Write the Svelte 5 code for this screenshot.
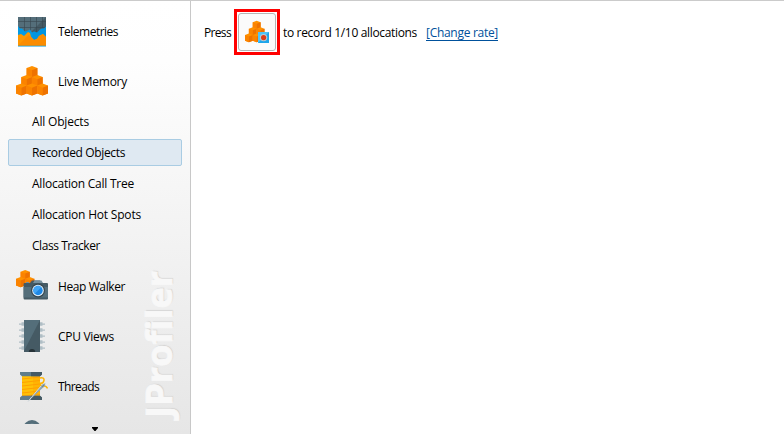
<script>
  const before = [
    { name: 'Telemetries', icon: 'telemetry', w: 59 },
    { name: 'Live Memory', icon: 'memory', w: 68 }
  ];
  const views = [
    { name: 'All Objects', w: 56 },
    { name: 'Recorded Objects', w: 92 },
    { name: 'Allocation Call Tree', w: 101 },
    { name: 'Allocation Hot Spots', w: 108 },
    { name: 'Class Tracker', w: 67 }
  ];
  const after = [
    { name: 'Heap Walker', icon: 'heap', w: 66 },
    { name: 'CPU Views', icon: 'cpu', w: 55 },
    { name: 'Threads', icon: 'thread', w: 40 }
  ];
  const selected = 'Recorded Objects';

  // Tightens or widens a label so that it takes exactly the given width.
  function fit(node, width) {
    const natural = node.getBoundingClientRect().width;
    node.style.letterSpacing = (width + 1 - natural) / node.textContent.length + 'px';
  }
</script>

{#snippet cube(x, y, s)}
  <g transform={`translate(${x} ${y}) scale(${s})`}>
    <path d="M0 2 5.4 0l5.4 2v8L5.4 12 0 10z" fill="#ff9100" />
    <path d="M0 2 5.4 4.2V12L0 10z" fill="#fb8300" />
    <path d="M10.8 2 5.4 4.2V12l5.4-2z" fill="#ee7200" />
  </g>
{/snippet}

{#snippet cubes()}
  {@render cube(10.6, 1, 1)}
  {@render cube(5.3, 10, 1)}
  {@render cube(15.9, 10, 1)}
  {@render cube(0, 18.5, 1)}
  {@render cube(10.6, 18.5, 1)}
  {@render cube(21.2, 18.5, 1)}
{/snippet}

{#snippet row(item)}
  <div class="section">
    <svg width="32" height="32" viewBox="0 0 32 32">
      {#if item.icon === 'telemetry'}
        <path d="M2 2h28v28.5H2z" fill="#455a64" />
        <path d="M2 2h28L14 18H2z" fill="#546e7a" />
        <path d="M2 6.5h28M2 12.5h28M8.5 2v16M14.5 2v16M20.5 2v16M26.5 2v16" stroke="#37474f" stroke-width=".6" />
        <path d="M2 11l2 2.5h2l3 3 3-1 2-1 2 3 2-1 3 1 3-3 2-1h2l2-2v20H2z" fill="#039be5" />
        <path d="M17 17l1-.5 3 1 3-3 2-1h2l2-2v9l-3-1-5 3-6 4z" fill="#0288d1" opacity=".3" />
        <path d="M2 20l3-1 3 2 2-2 2-2 2 1 1 4 3 3 3-1 2-3 2-1 2-1 3 3v8.5H2z" fill="#ff9800" />
        <path d="M2 30.5 12.5 20l2.5 2 3 3 3-1 2-3 4-2 3 3v8.5z" fill="#fb8c00" />
      {:else if item.icon === 'memory'}
        {@render cubes()}
      {:else if item.icon === 'heap'}
        {@render cube(4.6, 0, 0.85)}
        {@render cube(0, 7, 0.85)}
        {@render cube(9.2, 7, 0.85)}
        <path d="M14 13l2-2.5h8l2 2.5h5q1 0 1 1v14.5q0 1-1 1H8.6q-1 0-1-1V14q0-1 1-1z" fill="#455a64" />
        <path d="M17 13l1.5-2.5h7l1.5 2.5zM10 12h3v1h-3z" fill="#78909c" />
        <path d="M7.6 17H32v10.5H7.6z" fill="#546e7a" />
        <circle cx="22" cy="20.5" r="7" fill="#37474f" />
        <circle cx="22" cy="20.5" r="5.8" fill="#e3f2fd" />
        <circle cx="22" cy="20.5" r="4.7" fill="#1e88e5" />
        <path d="M18.8 23.8a4.6 4.6 0 0 1 6.4-6.6z" fill="#42a5f5" />
      {:else if item.icon === 'cpu'}
        {#each [4, 10, 16, 22, 28] as y}
          <path d={`M3 ${y - 0.5}h2.5v-1.3h3v3.6h-3V${y + 0.8}H3zM29 ${y - 0.5}h-2.5v-1.3h-3v3.6h3V${y + 0.8}H29z`} fill="#b0bec5" />
        {/each}
        <path d="M8 0h16v32H8z" fill="#455a64" />
        <path d="M8 0h16L8 31z" fill="#546e7a" />
        <path d="M12.8 32a3.2 3 0 0 1 6.4 0z" fill="#263238" />
      {:else}
        <path d="M6 6h18v20H6z" fill="#ffc107" />
        <path d="M6 9l18-2M6 12.5l18-2M6 16l18-2M6 19.5l18-2M6 23l18-2M6 26l18-1.5" stroke="#ffa000" stroke-width="1" />
        <path d="M17 6h7v20h-7z" fill="#ffa000" opacity=".4" />
        <path d="M4 2h22v2.5l-2 1.7H6L4 4.5z" fill="#607d8b" />
        <path d="M6 25.8h18l2 1.7V30H4v-2.5z" fill="#607d8b" />
        <path d="M15 2h11v2.5l-2 1.7h-9zM15 25.8h9l2 1.7V30H15z" fill="#455a64" />
        <path d="M24 8q4.5-.8 4 2.3t-3.5 3q0 4 2 3.7 3-2.5 5 1.5" fill="none" stroke="#ffb300" stroke-width="1.5" />
        <path d="M12 31.5 26.6 14.2l2.8-1L28.8 16z" fill="#90a4ae" />
        <path d="M12 31.5 25 16" stroke="#cfd8dc" stroke-width="1" />
        <path d="m26.2 17 1.8-2" stroke="#607d8b" stroke-width=".8" />
      {/if}
    </svg>
    <span use:fit={item.w}>{item.name}</span>
  </div>
{/snippet}

<div class="window">
  <aside>
    <nav>
      {#each before as item}{@render row(item)}{/each}
      {#each views as view}
        <div class="slot">
          <div class="view" class:selected={view.name === selected}>
            <span use:fit={view.w}>{view.name}</span>
          </div>
        </div>
      {/each}
      {#each after as item}{@render row(item)}{/each}
      <div class="section">
        <svg width="32" height="32" viewBox="0 0 32 32">
          <circle cx="16" cy="9" r="9" fill="#546e7a" />
          <circle cx="16" cy="10" r="6.5" fill="#78909c" />
        </svg>
      </div>
    </nav>
    <div class="more"><svg width="6" height="4" viewBox="0 0 6 4"><path d="M0 0h6v1L3.5 4h-1L0 1z" fill="#000" /></svg></div>
    <div class="brand">JProfiler</div>
  </aside>
  <main>
    <span use:fit={26}>Press</span>
    <div class="highlight">
      <button aria-label="Record allocations">
        <svg width="24" height="24" viewBox="0 0 24 24">
          <g transform="scale(.73)">{@render cubes()}</g>
          <path d="M13 12h11v11H13z" fill="#1ea5ea" />
          <path d="M13 12h11L13 23z" fill="#4fc3f7" />
          <circle cx="18.6" cy="17.6" r="3.7" fill="#b7c9d3" />
          <circle cx="18.6" cy="17.6" r="2.6" fill="#dd3b19" />
        </svg>
      </button>
    </div>
    <span use:fit={133}>to record 1/10 allocations</span>
    <a href="#rate"><span use:fit={71}>[Change rate]</span></a>
  </main>
</div>

<style>
  :global(body) { margin: 0; }
  .window {
    display: flex;
    box-sizing: border-box;
    width: 784px;
    height: 434px;
    border-top: 1px solid #cbcbcb;
    background: #fff;
    color: #000;
    font: 12px/16px "Open Sans", "Noto Sans", sans-serif;
    overflow: hidden;
    white-space: nowrap;
  }
  aside {
    position: relative;
    display: flex;
    flex-direction: column;
    box-sizing: border-box;
    width: 191px;
    border-right: 1px solid #c8c8c8;
    background: linear-gradient(#fff 0, #fefefe 60px, #e6e6e6 100%);
  }
  nav {
    position: relative;
    z-index: 1;
    height: 418px;
    padding-top: 5px;
    overflow: hidden;
  }
  .section {
    display: flex;
    align-items: center;
    gap: 10px;
    height: 50px;
    padding-left: 16px;
  }
  .section svg { flex: none; }
  .section span { padding-top: 2px; }
  .slot {
    box-sizing: border-box;
    height: 31px;
    padding: 2px 8px;
  }
  .view {
    box-sizing: border-box;
    height: 27px;
    padding: 5px 0 4px 23px;
    border: 1px solid transparent;
    border-radius: 2px;
  }
  .selected {
    border-color: #a9cce3;
    background: #dfe9f2;
  }
  .more {
    display: flex;
    justify-content: center;
    padding-top: 3px;
  }
  .brand {
    position: absolute;
    left: 139px;
    bottom: 16px;
    writing-mode: vertical-rl;
    transform: rotate(180deg);
    color: #f8f8f8;
    font: bold 36px/40px "Open Sans", "Noto Sans", sans-serif;
    -webkit-text-stroke: .8px #f8f8f8;
    text-shadow: 1px 1px 1px #d2d2d2;
  }
  main {
    display: flex;
    align-items: center;
    align-self: flex-start;
    height: 46px;
    padding: 8px 0 0 13px;
  }
  main > span, main > a { position: relative; top: 1px; }
  .highlight {
    box-sizing: border-box;
    width: 46px;
    height: 46px;
    margin: 0 3px;
    padding: 1px;
    border: 3px solid #f00;
  }
  button {
    display: flex;
    align-items: center;
    justify-content: center;
    box-sizing: border-box;
    width: 38px;
    height: 38px;
    padding: 0;
    border: 1px solid #b5b5b5;
    border-radius: 3px;
    background: #fbfbfb;
  }
  a {
    margin-left: 9px;
    color: #00519c;
    line-height: 14px;
    text-decoration: none;
    border-bottom: 1px solid #00519c;
  }
</style>
